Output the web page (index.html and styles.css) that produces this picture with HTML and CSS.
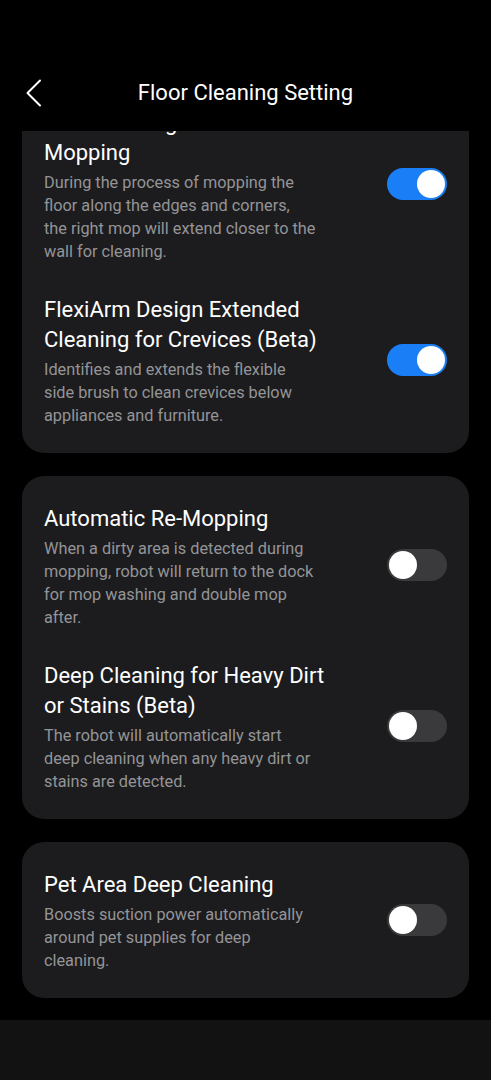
FILE: index.html
```html
<!DOCTYPE html>
<html>
<head>
<title>Floor Cleaning Setting</title>
<meta charset='utf-8'/>
<link rel="stylesheet" href="styles.css">
</head>
<body>
<div class="page">
	<div class="header">
		<a class="back" href="#">
			<svg width="16" height="28" viewBox="0 0 16 28">
				<polyline points="14,1.5 1.5,14 14,26.5" fill="none" stroke="#fff" stroke-width="2" stroke-linecap="round" stroke-linejoin="round"/>
			</svg>
		</a>
		<div class="title">Floor Cleaning Setting</div>
		<div></div>
	</div>

	<div class="content">
		<div class="list">
			<div class="card">
				<div class="item">
					<div class="text">
						<div class="name">Extended Edge and Corner Mopping</div>
						<div class="desc">During the process of mopping the floor along the edges and corners, the right mop will extend closer to the wall for cleaning.</div>
					</div>
					<div class="switch on"><i></i></div>
				</div>
				<div class="item">
					<div class="text">
						<div class="name">FlexiArm Design Extended Cleaning for Crevices (Beta)</div>
						<div class="desc">Identifies and extends the flexible side brush to clean crevices below appliances and furniture.</div>
					</div>
					<div class="switch on"><i></i></div>
				</div>
			</div>

			<div class="card">
				<div class="item">
					<div class="text">
						<div class="name">Automatic Re-Mopping</div>
						<div class="desc">When a dirty area is detected during mopping, robot will return to the dock for mop washing and double mop after.</div>
					</div>
					<div class="switch"><i></i></div>
				</div>
				<div class="item">
					<div class="text">
						<div class="name">Deep Cleaning for Heavy Dirt or Stains (Beta)</div>
						<div class="desc">The robot will automatically start deep cleaning when any heavy dirt or stains are detected.</div>
					</div>
					<div class="switch"><i></i></div>
				</div>
			</div>

			<div class="card">
				<div class="item">
					<div class="text">
						<div class="name">Pet Area Deep Cleaning</div>
						<div class="desc">Boosts suction power automatically around pet supplies for deep cleaning.</div>
					</div>
					<div class="switch"><i></i></div>
				</div>
			</div>
		</div>
	</div>

	<div class="bottom"></div>
</div>
</body>
</html>
```

FILE: styles.css
```css
body {
	margin: 0;
	background: #000;
	font-family: Roboto, "Noto Sans", sans-serif;
	color: #fff;
}
.page {
	width: 491px;
	height: 1080px;
	display: flex;
	flex-direction: column;
}
.header {
	height: 131px;
	box-sizing: border-box;
	padding-top: 74px;
	display: grid;
	grid-template-columns: 1fr auto 1fr;
	align-items: start;
	background: #000;
}
.header .back {
	display: block;
	width: 16px;
	height: 28px;
	margin: 5px 0 0 26px;
}
.header .title {
	font-size: 22px;
	line-height: 38px;
}
.content {
	height: 889px;
	overflow: hidden;
	padding: 0 22px;
}
/* list is scrolled up a little, first card runs under the header */
.list {
	margin-top: -53px;
	display: flex;
	flex-direction: column;
	gap: 23px;
}
.list .card:first-child {
	padding-top: 30px;
}
.card {
	background: #1c1c1e;
	border-radius: 22px;
	padding: 28px 22px 26px;
	display: flex;
	flex-direction: column;
	gap: 32px;
}
.item {
	display: flex;
	align-items: center;
	justify-content: space-between;
}
.item .text {
	width: 290px;
}
.item .name {
	font-size: 22px;
	line-height: 30px;
	margin-bottom: 3px;
}
.item .desc {
	width: 272px;
	font-size: 16.3px;
	line-height: 23px;
	color: #949497;
}
.switch {
	width: 60px;
	height: 32px;
	border-radius: 16px;
	background: #3a3a3d;
	padding: 2px;
	box-sizing: border-box;
	display: flex;
	flex-shrink: 0;
	margin-bottom: 3px;
}
.switch i {
	width: 28px;
	height: 28px;
	border-radius: 50%;
	background: #fff;
}
.switch.on {
	background: #1a7ff6;
	justify-content: flex-end;
}
.bottom {
	flex: 1;
	background: #121212;
}
```
